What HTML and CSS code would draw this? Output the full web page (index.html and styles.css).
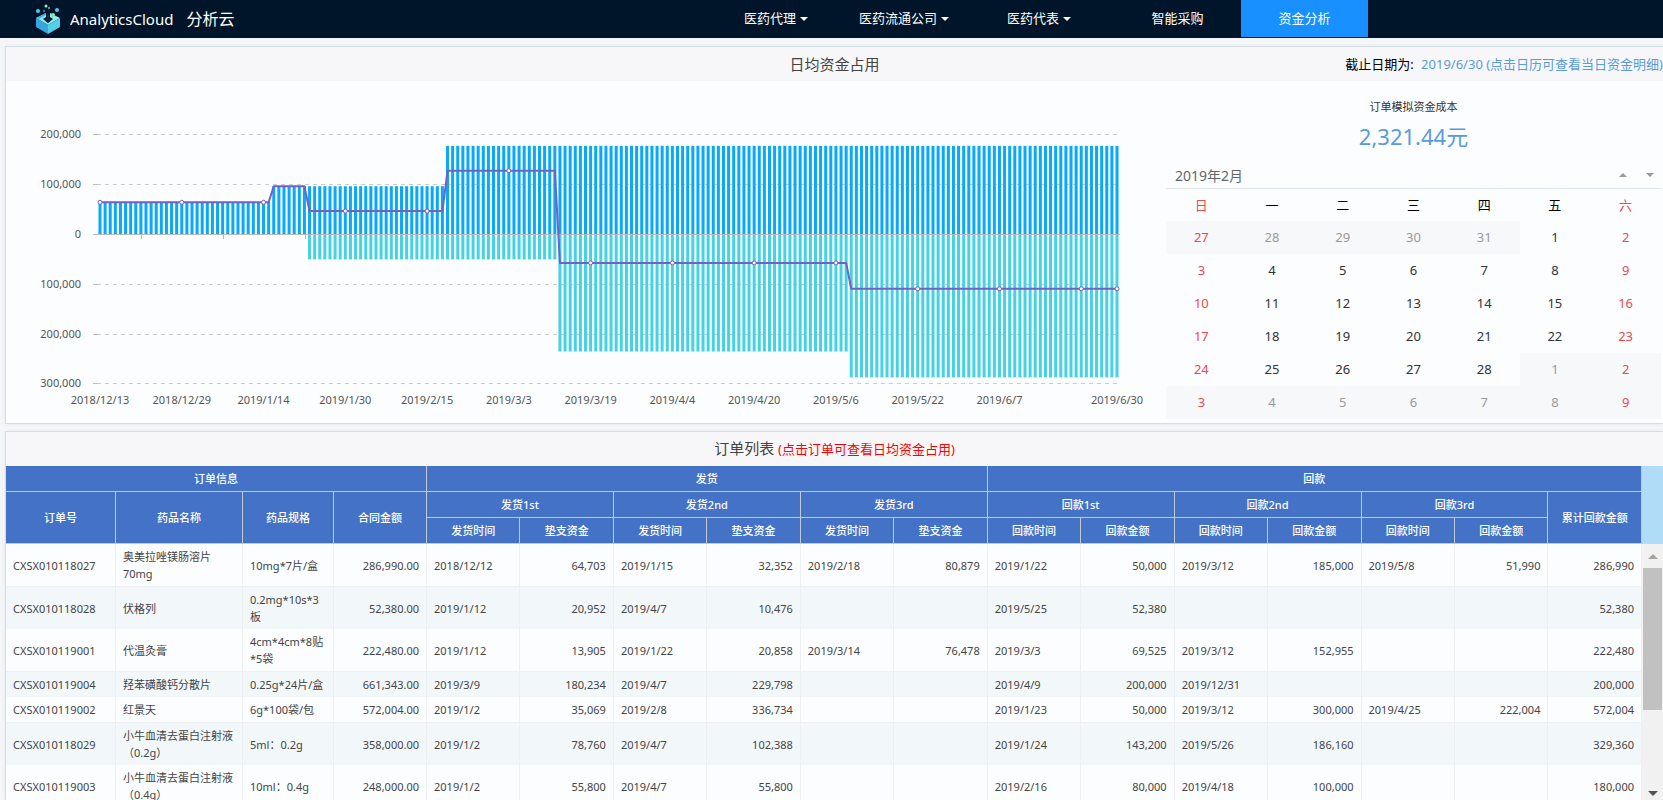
FILE: index.html
```html
<!DOCTYPE html>
<html lang="zh-CN">
<head>
<meta charset="utf-8">
<title>AnalyticsCloud 分析云</title>
<link rel="stylesheet" href="styles.css">
</head>
<body>
<header class="topbar">
  <a class="brand" href="#">
    <svg class="logo" viewBox="0 0 26 31" aria-hidden="true">
      <path fill="#8ceaf2" d="M1 14 11 9v4l-3 2 5 4 5-4-3-2V9l10 5-12 7z"/>
      <path fill="#3aa6e0" d="M1 14l12 7v9L1 23z"/>
      <path fill="#4fd0e8" d="M25 14l-12 7v9l12-7z"/>
      <path fill="#3bb4e2" d="M1 14 11 9v2L4 15z"/>
      <path fill="#06263f" d="M12 9h2v6h3l-4 4-4-4h3z"/>
      <circle cx="3" cy="7" r="2" fill="#4cc9f0"/>
      <circle cx="11" cy="2" r="1.5" fill="#9fe8d8"/>
      <circle cx="14" cy="4" r="1" fill="#4cc9f0"/>
      <circle cx="9" cy="7" r="1" fill="#2f9fdc"/>
      <circle cx="22" cy="6" r="2" fill="#4cc9f0"/>
      <circle cx="18" cy="11" r="2" fill="#8fe0a8"/>
    </svg>
    <span class="brand-en">AnalyticsCloud</span>
    <span class="brand-cn">分析云</span>
  </a>
  <nav class="nav">
    <button class="nav-item first" type="button">医药代理<i class="caret"></i></button>
    <button class="nav-item" type="button">医药流通公司<i class="caret"></i></button>
    <button class="nav-item wide" type="button">医药代表<i class="caret"></i></button>
    <a class="nav-item link" href="#">智能采购</a>
    <a class="nav-item link active" href="#">资金分析</a>
  </nav>
</header>

<main class="page">
  <section class="panel">
    <div class="panel-head">
      <h2>日均资金占用</h2>
      <p class="deadline">截止日期为: <span>2019/6/30 (点击日历可查看当日资金明细)</span></p>
    </div>
    <div class="overview">
      <svg class="chart" id="chart" viewBox="6 81 1160 342" role="img" aria-label="日均资金占用"></svg>
      <aside class="side">
        <p class="kpi-label">订单模拟资金成本</p>
        <p class="kpi-value">2,321.44元</p>
        <div class="month">
          <span>2019年2月</span>
          <button type="button" class="up" aria-label="上个月"></button>
          <button type="button" class="down" aria-label="下个月"></button>
        </div>
        <table class="calendar">
          <thead><tr><th>日</th><th>一</th><th>二</th><th>三</th><th>四</th><th>五</th><th>六</th></tr></thead>
          <tbody>
            <tr><td class="out">27</td><td class="out">28</td><td class="out">29</td><td class="out">30</td><td class="out">31</td><td>1</td><td>2</td></tr>
            <tr><td>3</td><td>4</td><td>5</td><td>6</td><td>7</td><td>8</td><td>9</td></tr>
            <tr><td>10</td><td>11</td><td>12</td><td>13</td><td>14</td><td>15</td><td>16</td></tr>
            <tr><td>17</td><td>18</td><td>19</td><td>20</td><td>21</td><td>22</td><td>23</td></tr>
            <tr><td>24</td><td>25</td><td>26</td><td>27</td><td>28</td><td class="out">1</td><td class="out">2</td></tr>
            <tr><td class="out">3</td><td class="out">4</td><td class="out">5</td><td class="out">6</td><td class="out">7</td><td class="out">8</td><td class="out">9</td></tr>
          </tbody>
        </table>
      </aside>
    </div>
  </section>

  <section class="panel orders">
    <div class="panel-head">
      <h2>订单列表 <small>(点击订单可查看日均资金占用)</small></h2>
    </div>
    <div class="orders-body">
      <div class="grid-wrap">
      <table class="grid">
        <colgroup><col class="c-id"><col class="c-name"><col class="c-spec"><col class="c-sum"><col span="13"></colgroup>
        <thead>
          <tr><th colspan="4">订单信息</th><th colspan="6">发货</th><th colspan="7">回款</th></tr>
          <tr>
            <th rowspan="2">订单号</th><th rowspan="2">药品名称</th><th rowspan="2">药品规格</th><th rowspan="2">合同金额</th>
            <th colspan="2">发货1st</th><th colspan="2">发货2nd</th><th colspan="2">发货3rd</th>
            <th colspan="2">回款1st</th><th colspan="2">回款2nd</th><th colspan="2">回款3rd</th>
            <th rowspan="2">累计回款金额</th>
          </tr>
          <tr>
            <th>发货时间</th><th>垫支资金</th><th>发货时间</th><th>垫支资金</th><th>发货时间</th><th>垫支资金</th>
            <th>回款时间</th><th>回款金额</th><th>回款时间</th><th>回款金额</th><th>回款时间</th><th>回款金额</th>
          </tr>
        </thead>
        <tbody>
          <tr><td>CXSX010118027</td><td>奥美拉唑镁肠溶片 70mg</td><td>10mg*7片/盒</td><td class="n">286,990.00</td><td>2018/12/12</td><td class="n">64,703</td><td>2019/1/15</td><td class="n">32,352</td><td>2019/2/18</td><td class="n">80,879</td><td>2019/1/22</td><td class="n">50,000</td><td>2019/3/12</td><td class="n">185,000</td><td>2019/5/8</td><td class="n">51,990</td><td class="n">286,990</td></tr>
          <tr><td>CXSX010118028</td><td>伏格列</td><td>0.2mg*10s*3<br>板</td><td class="n">52,380.00</td><td>2019/1/12</td><td class="n">20,952</td><td>2019/4/7</td><td class="n">10,476</td><td></td><td></td><td>2019/5/25</td><td class="n">52,380</td><td></td><td></td><td></td><td></td><td class="n">52,380</td></tr>
          <tr><td>CXSX010119001</td><td>代温灸膏</td><td>4cm*4cm*8贴<br>*5袋</td><td class="n">222,480.00</td><td>2019/1/12</td><td class="n">13,905</td><td>2019/1/22</td><td class="n">20,858</td><td>2019/3/14</td><td class="n">76,478</td><td>2019/3/3</td><td class="n">69,525</td><td>2019/3/12</td><td class="n">152,955</td><td></td><td></td><td class="n">222,480</td></tr>
          <tr><td>CXSX010119004</td><td>羟苯磺酸钙分散片</td><td>0.25g*24片/盒</td><td class="n">661,343.00</td><td>2019/3/9</td><td class="n">180,234</td><td>2019/4/7</td><td class="n">229,798</td><td></td><td></td><td>2019/4/9</td><td class="n">200,000</td><td>2019/12/31</td><td></td><td></td><td></td><td class="n">200,000</td></tr>
          <tr><td>CXSX010119002</td><td>红景天</td><td>6g*100袋/包</td><td class="n">572,004.00</td><td>2019/1/2</td><td class="n">35,069</td><td>2019/2/8</td><td class="n">336,734</td><td></td><td></td><td>2019/1/23</td><td class="n">50,000</td><td>2019/3/12</td><td class="n">300,000</td><td>2019/4/25</td><td class="n">222,004</td><td class="n">572,004</td></tr>
          <tr><td>CXSX010118029</td><td>小牛血清去蛋白注射液（0.2g）</td><td>5ml：0.2g</td><td class="n">358,000.00</td><td>2019/1/2</td><td class="n">78,760</td><td>2019/4/7</td><td class="n">102,388</td><td></td><td></td><td>2019/1/24</td><td class="n">143,200</td><td>2019/5/26</td><td class="n">186,160</td><td></td><td></td><td class="n">329,360</td></tr>
          <tr><td>CXSX010119003</td><td>小牛血清去蛋白注射液（0.4g）</td><td>10ml：0.4g</td><td class="n">248,000.00</td><td>2019/1/2</td><td class="n">55,800</td><td>2019/4/7</td><td class="n">55,800</td><td></td><td></td><td>2019/2/16</td><td class="n">80,000</td><td>2019/4/18</td><td class="n">100,000</td><td></td><td></td><td class="n">180,000</td></tr>
        </tbody>
      </table>
      </div>
      <div class="gutter">
        <div class="corner"></div>
        <div class="scrollbar"><i class="arrow-up"></i><i class="thumb"></i><i class="arrow-down"></i></div>
      </div>
    </div>
  </section>
</main>
<script src="chart.js"></script>
</body>
</html>
```

FILE: chart.js
```js
(function () {
  var NS = 'http://www.w3.org/2000/svg';
  var svg = document.getElementById('chart');
  var DAYS = 200, X0 = 100, X1 = 1117, ZERO = 234.5, UNIT = 49.8 / 100;
  var STEP = (X1 - X0) / (DAYS - 1);

  function add(tag, cls, attrs, text) {
    var el = document.createElementNS(NS, tag);
    el.setAttribute('class', cls);
    for (var k in attrs) el.setAttribute(k, attrs[k]);
    if (text) el.textContent = text;
    svg.appendChild(el);
  }
  function x(i) { return X0 + i * STEP; }
  function y(v) { return ZERO - v * UNIT; }
  // amounts in thousands
  function paid(i) { return i < 34 ? 64.7 : i < 68 ? 97 : 178; }
  function received(i) { return i < 41 ? 0 : i < 90 ? -50 : i < 147 ? -235 : -287; }
  function net(i) { return paid(i) + received(i); }

  [200, 100, 0, -100, -200, -300].forEach(function (v) {
    var gy = Math.floor(y(v)) + 0.5;
    if (v) {
      add('path', 'gridline', { d: 'M97 ' + gy + 'H' + X1 });
      add('path', 'axis', { d: 'M93 ' + gy + 'h5' });
    }
    add('text', 'ylabel', { x: 81, y: gy + 3 }, v ? Math.abs(v) + ',000' : '0');
  });

  for (var i = 0; i < DAYS; i++) {
    add('rect', 'bar-in', { x: x(i) - 1.5, y: y(paid(i)), width: 3, height: paid(i) * UNIT });
    if (received(i)) {
      add('rect', 'bar-out', { x: x(i) - 1.5, y: ZERO, width: 3, height: -received(i) * UNIT });
    }
  }
  add('path', 'axis', { d: 'M93 234.5H1120M141.5 235v4M223.5 235v4M305.5 235v4' });

  var d = 'M' + x(0) + ' ' + y(net(0));
  for (i = 1; i < DAYS; i++) d += 'L' + x(i) + ' ' + y(net(i));
  add('path', 'line', { d: d });

  var labels = ['2018/12/13', '2018/12/29', '2019/1/14', '2019/1/30', '2019/2/15', '2019/3/3',
    '2019/3/19', '2019/4/4', '2019/4/20', '2019/5/6', '2019/5/22', '2019/6/7', '', '2019/6/30'];
  labels.forEach(function (t, n) {
    var day = Math.min(n * 16, DAYS - 1);
    add('circle', 'dot', { cx: x(day), cy: y(net(day)), r: 2 });
    if (t) add('text', 'xlabel', { x: x(day), y: 404 }, t);
  });
})();
```

FILE: styles.css
```css
* { box-sizing: border-box; }

body {
  margin: 0;
  height: 100vh;
  overflow: hidden;
  display: flex;
  flex-direction: column;
  background: #f5f6f8;
  color: #444;
  font: 11px/17px "Noto Sans", "Noto Sans CJK SC", sans-serif;
}

h2, p { margin: 0; font-weight: 400; }
a { color: inherit; text-decoration: none; }
button { font: inherit; color: inherit; background: none; border: 0; padding: 0; }

/* top bar */
.topbar {
  flex: none;
  display: flex;
  height: 38px;
  background: #001529;
  color: #fff;
}
.brand { display: flex; align-items: center; padding-left: 35px; }
.logo { width: 26px; height: 31px; margin-right: 9px; }
.brand-en { font-size: 15px; }
.brand-cn { font-size: 16px; margin-left: 13px; }
.nav { display: flex; margin-left: auto; margin-right: 295px; font-size: 13px; }
.nav-item {
  width: 120px;
  height: 37px;
  display: flex;
  align-items: center;
  justify-content: center;
}
.nav-item.first { width: 136px; }
.nav-item.wide { width: 150px; }
.nav-item.link { width: 127px; }
.active { background: #1890ff; }
.caret {
  margin-left: 4px;
  border: 4px solid transparent;
  border-top-color: #fff;
  border-bottom: 0;
}

/* panels */
.page {
  flex: 1;
  min-height: 0;
  display: flex;
  flex-direction: column;
  gap: 9px;
  padding: 9px 0 0 6px;
}
.panel {
  background: #fbfdff;
  box-shadow: 0 0 0 1px #d3deea, 0 0 4px #d3dce6;
}
.panel-head {
  position: relative;
  display: flex;
  align-items: center;
  justify-content: center;
  height: 34px;
  background: #f7f7f9;
}
.panel-head h2 { font-size: 15px; }
.panel-head small { font-size: 13px; color: #f00; }
.deadline {
  position: absolute;
  right: 0;
  font-size: 13px;
  color: #000;
}
.deadline span { margin-left: 4px; color: #5b9bd9; }

.overview { display: flex; }
.chart { flex: 1; min-width: 0; }
.side { width: 497px; padding: 17px 2px 0 0; }
.kpi-label { text-align: center; color: #333; }
.kpi-value { margin-top: 5px; text-align: center; font-size: 22px; line-height: 32px; color: #5b9bd9; }
.month {
  display: flex;
  align-items: center;
  height: 27px;
  margin-top: 10px;
  padding: 0 7px 0 9px;
  border-bottom: 1px solid #dfe5ec;
  font-size: 14px;
  color: #666;
}
.month span { flex: 1; }
.up, .down { border: 4px solid transparent; }
.up { border-bottom-color: #999; border-top: 0; margin-right: 19px; }
.down { border-top-color: #999; border-bottom: 0; }

.calendar {
  width: 100%;
  border-collapse: collapse;
  table-layout: fixed;
  font-size: 13px;
  color: #333;
  text-align: center;
}
.calendar th { height: 32px; font-weight: 400; padding: 0; color: #000; }
.calendar td { height: 33px; padding: 0; }
.calendar .out { background: #f7f8f9; color: #999; }
.calendar tr > :first-child, .calendar tr > :last-child { color: #f04848; }

/* chart */
.gridline { stroke: #ccc; stroke-dasharray: 4 4; }
.axis { stroke: #bbb; fill: none; }
.bar-in { fill: #08a9fb; }
.bar-out { fill: #45d2e2; }
.line { fill: none; stroke: #7460c0; stroke-width: 2; stroke-linejoin: round; }
.dot { fill: #fff; stroke: #7460c0; }
.ylabel, .xlabel { font-size: 11px; fill: #555; }
.ylabel { text-anchor: end; }
.xlabel { text-anchor: middle; }

/* orders */
.orders { flex: 1; min-height: 0; display: flex; flex-direction: column; }
.orders .panel-head { flex: none; }
.orders-body { flex: 1; min-height: 0; display: flex; overflow: hidden; }
.grid-wrap { flex: 1; min-width: 0; }
.grid {
  width: 100%;
  border-collapse: separate;
  border-spacing: 0;
  table-layout: fixed;
}
.c-id { width: 110px; }
.c-name { width: 127px; }
.c-spec { width: 91px; }
.c-sum { width: 93px; }
.grid th {
  height: 26px;
  padding: 0;
  background: #4472c6;
  color: #fff;
  font-weight: 500;
  border: solid #c3c9d2;
  border-width: 0 1px 1px 0;
}
.grid td {
  padding: 4px 7px;
  border-right: 1px solid #eceff3;
}
.grid tbody tr:nth-child(odd) td { border-bottom: 1px solid #eceff3; }
.grid tbody tr:nth-child(even) td { background: #f2f7fa; }
.grid .n { text-align: right; }

.gutter { width: 21px; display: flex; flex-direction: column; }
.corner { height: 78px; background: #b0dcf8; }
.scrollbar {
  flex: 1;
  display: flex;
  flex-direction: column;
  align-items: center;
  padding: 10px 0 4px;
  background: #f1f1f1;
}
.arrow-up { border: 5px solid transparent; border-bottom-color: #a3a3a3; border-top: 0; }
.thumb { width: 19px; height: 142px; margin-top: 9px; background: #c1c1c1; }
.arrow-down { margin-top: auto; border: 5px solid transparent; border-top-color: #505050; border-bottom: 0; }
```
